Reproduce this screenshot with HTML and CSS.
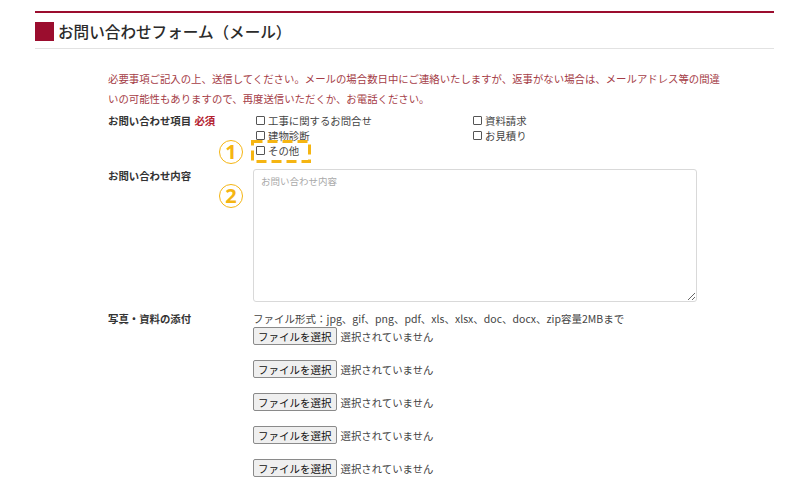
FILE: index.html
```html
<!DOCTYPE html>
<html lang="ja">
<head>
<meta charset="utf-8">
<title>お問い合わせフォーム（メール）</title>
<link rel="stylesheet" href="styles.css">
</head>
<body>
<div class="page">
  <div class="panel">
    <h2 class="title"><span class="mark"></span>お問い合わせフォーム（メール）</h2>
    <div class="form">
      <p class="intro">必要事項ご記入の上、送信してください。メールの場合数日中にご連絡いたしますが、返事がない場合は、メールアドレス等の間違いの可能性もありますので、再度送信いただくか、お電話ください。</p>

      <div class="row row-items">
        <div class="label">お問い合わせ項目 <span class="req">必須</span></div>
        <div class="checks">
          <label class="check"><span class="box"></span>工事に関するお問合せ</label>
          <label class="check"><span class="box"></span>資料請求</label>
          <label class="check"><span class="box"></span>建物診断</label>
          <label class="check"><span class="box"></span>お見積り</label>
          <label class="check"><span class="box"></span>その他</label>
        </div>
      </div>

      <div class="row row-message">
        <div class="label">お問い合わせ内容</div>
        <div class="field">
          <textarea class="message" placeholder="お問い合わせ内容"></textarea>
        </div>
      </div>

      <div class="row row-files">
        <div class="label label-files">写真・資料の添付</div>
        <div class="field">
          <div class="formats">ファイル形式：jpg、gif、png、pdf、xls、xlsx、doc、docx、zip容量2MBまで</div>
          <div class="files">
            <div class="file"><span class="file-btn">ファイルを選択</span><span class="file-name">選択されていません</span></div>
            <div class="file"><span class="file-btn">ファイルを選択</span><span class="file-name">選択されていません</span></div>
            <div class="file"><span class="file-btn">ファイルを選択</span><span class="file-name">選択されていません</span></div>
            <div class="file"><span class="file-btn">ファイルを選択</span><span class="file-name">選択されていません</span></div>
            <div class="file"><span class="file-btn">ファイルを選択</span><span class="file-name">選択されていません</span></div>
          </div>
        </div>
      </div>
    </div>
  </div>

  <div class="badge badge-1">1</div>
  <div class="badge badge-2">2</div>
  <svg class="dash-box" width="60" height="23" viewBox="0 0 60 23">
    <rect x="1.5" y="1.5" width="57" height="20" fill="none" stroke="#f5b512" stroke-width="3" stroke-dasharray="10 5"/>
  </svg>
</div>
</body>
</html>
```
FILE: styles.css
```css
html, body {
  margin: 0;
  padding: 0;
  background: #ffffff;
}

body {
  font-family: "Noto Sans CJK JP", "Noto Sans", sans-serif;
  color: #333333;
}

.page {
  position: relative;
  width: 812px;
  height: 482px;
  overflow: hidden;
}

.panel {
  margin: 11px 0 0 35px;
  width: 739px;
  border-top: 2px solid #9b0d2e;
}

.title {
  margin: 0;
  height: 35px;
  display: flex;
  align-items: center;
  border-bottom: 1px solid #e2e2e2;
  font-size: 15.6px;
  font-weight: 500;
  color: #2b2b2b;
}

.mark {
  width: 19px;
  height: 19px;
  background: #9b0d2e;
  margin: 1px 4px 0 0;
  flex: none;
}

.form {
  padding-left: 73px;
}

.intro {
  margin: 20px 0 0;
  width: 622px;
  font-size: 10.4px;
  line-height: 20px;
  color: #a53d47;
}

.row {
  display: grid;
  grid-template-columns: 145px 1fr;
}

.label {
  font-size: 10.4px;
  font-weight: bold;
  line-height: 15px;
  color: #333333;
}

.req {
  color: #b3212f;
  margin-left: 1px;
}

.row-items {
  margin-top: 4px;
}

.checks {
  display: grid;
  grid-template-columns: 217px auto;
  padding-left: 3px;
}

.check {
  display: flex;
  align-items: center;
  font-size: 10.4px;
  line-height: 15px;
  color: #444444;
}

.box {
  width: 7px;
  height: 7px;
  border: 1px solid #555555;
  border-radius: 1px;
  margin-right: 3px;
  flex: none;
}

.row-message {
  margin-top: 10px;
}

.message {
  display: block;
  margin: 1px 0 0;
  width: 444px;
  height: 133px;
  box-sizing: border-box;
  border: 1px solid #d9d9d9;
  border-radius: 3px;
  padding: 4px 7px;
  font-family: "Noto Sans CJK JP", "Noto Sans", sans-serif;
  font-size: 9.5px;
  line-height: 14px;
  color: #333333;
  background: #ffffff;
}

.message::placeholder {
  color: #a9a9a9;
}

.row-files {
  margin-top: 9px;
}

.label-files {
  line-height: 16px;
}

.formats {
  font-size: 10.5px;
  line-height: 16px;
  color: #444444;
}

.files {
  display: flex;
  flex-direction: column;
  gap: 15px;
}

.file {
  display: flex;
  align-items: center;
  height: 18px;
}

.file-btn {
  box-sizing: border-box;
  height: 18px;
  padding: 0 4px;
  display: flex;
  align-items: center;
  border: 1px solid #8a8a8a;
  border-radius: 2px;
  background: #efefef;
  font-size: 10.5px;
  color: #111111;
}

.file-name {
  margin-left: 4px;
  font-size: 10.4px;
  color: #444444;
}

.badge {
  position: absolute;
  width: 24px;
  height: 24px;
  box-sizing: border-box;
  border: 1.2px solid #f5b512;
  border-radius: 50%;
  display: flex;
  align-items: center;
  justify-content: center;
  font-family: "Noto Sans", sans-serif;
  font-weight: bold;
  font-size: 20px;
  line-height: 1;
  color: #f5b512;
}

.badge-1 {
  left: 219px;
  top: 140px;
}

.badge-2 {
  left: 219px;
  top: 184px;
}

.dash-box {
  position: absolute;
  left: 251px;
  top: 140px;
}
```
